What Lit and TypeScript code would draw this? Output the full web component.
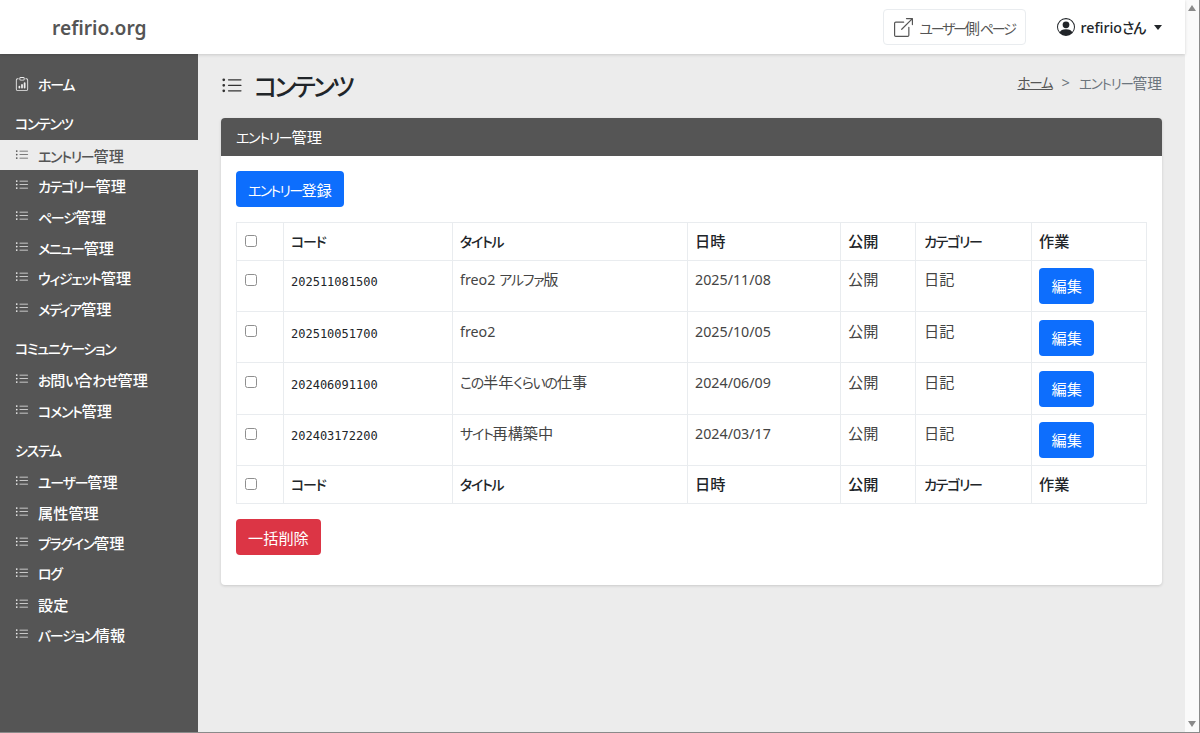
import { css, html, svg, LitElement } from "lit";
import { customElement } from "lit/decorators.js";

const listIcon = svg`<path fill-rule="evenodd" d="M5 11.5a.5.5 0 0 1 .5-.5h9a.5.5 0 0 1 0 1h-9a.5.5 0 0 1-.5-.5m0-4a.5.5 0 0 1 .5-.5h9a.5.5 0 0 1 0 1h-9a.5.5 0 0 1-.5-.5m0-4a.5.5 0 0 1 .5-.5h9a.5.5 0 0 1 0 1h-9a.5.5 0 0 1-.5-.5m-3 1a1 1 0 1 0 0-2 1 1 0 0 0 0 2m0 4a1 1 0 1 0 0-2 1 1 0 0 0 0 2m0 4a1 1 0 1 0 0-2 1 1 0 0 0 0 2"/>`;
const clipboardIcon = svg`<path d="M4 11a1 1 0 1 1 2 0v1a1 1 0 1 1-2 0zm6-4a1 1 0 1 1 2 0v5a1 1 0 1 1-2 0zM7 9a1 1 0 0 1 2 0v3a1 1 0 1 1-2 0z"/><path d="M4 1.5H3a2 2 0 0 0-2 2V14a2 2 0 0 0 2 2h10a2 2 0 0 0 2-2V3.5a2 2 0 0 0-2-2h-1v1h1a1 1 0 0 1 1 1V14a1 1 0 0 1-1 1H3a1 1 0 0 1-1-1V3.5a1 1 0 0 1 1-1h1z"/><path d="M9.5 1a.5.5 0 0 1 .5.5v1a.5.5 0 0 1-.5.5h-3a.5.5 0 0 1-.5-.5v-1a.5.5 0 0 1 .5-.5zm-3-1A1.5 1.5 0 0 0 5 1.5v1A1.5 1.5 0 0 0 6.5 4h3A1.5 1.5 0 0 0 11 2.5v-1A1.5 1.5 0 0 0 9.5 0z"/>`;
const externalIcon = svg`<path fill-rule="evenodd" d="M8.636 3.5a.5.5 0 0 0-.5-.5H1.5A1.5 1.5 0 0 0 0 4.5v10A1.5 1.5 0 0 0 1.5 16h10a1.5 1.5 0 0 0 1.5-1.5V7.864a.5.5 0 0 0-1 0V14.5a.5.5 0 0 1-.5.5h-10a.5.5 0 0 1-.5-.5v-10a.5.5 0 0 1 .5-.5h6.636a.5.5 0 0 0 .5-.5"/><path fill-rule="evenodd" d="M16 .5a.5.5 0 0 0-.5-.5h-5a.5.5 0 0 0 0 1h3.793L6.146 9.146a.5.5 0 1 0 .708.708L15 1.707V5.5a.5.5 0 0 0 1 0z"/>`;
const personIcon = svg`<path d="M11 6a3 3 0 1 1-6 0 3 3 0 0 1 6 0"/><path fill-rule="evenodd" d="M0 8a8 8 0 1 1 16 0A8 8 0 0 1 0 8m8-7a7 7 0 0 0-5.468 11.37C3.242 11.226 4.805 10 8 10s4.757 1.225 5.468 2.37A7 7 0 0 0 8 1"/>`;

const icon = (body: unknown, size: number) =>
  html`<svg class="icon" width=${size} height=${size} viewBox="0 0 16 16" fill="currentColor">${body}</svg>`;

// the reference font has narrow kana and small latin next to its kanji, so runs get their own class
const jp = (text: string) =>
  text.split(/([\u3040-\u30ff]+|[\x21-\x7e]+)/).map((run) => {
    if (/^[\u3040-\u30ff]/.test(run)) return html`<span class="k">${run}</span>`;
    if (/^[\x21-\x7e]/.test(run)) return html`<span class="l">${run}</span>`;
    return run;
  });

const menu = [
  {
    title: "コンテンツ",
    items: ["エントリー管理", "カテゴリー管理", "ページ管理", "メニュー管理", "ウィジェット管理", "メディア管理"],
  },
  { title: "コミュニケーション", items: ["お問い合わせ管理", "コメント管理"] },
  { title: "システム", items: ["ユーザー管理", "属性管理", "プラグイン管理", "ログ", "設定", "バージョン情報"] },
];

const entries = [
  { code: "202511081500", title: "freo2 アルファ版", date: "2025/11/08" },
  { code: "202510051700", title: "freo2", date: "2025/10/05" },
  { code: "202406091100", title: "この半年くらいの仕事", date: "2024/06/09" },
  { code: "202403172200", title: "サイト再構築中", date: "2024/03/17" },
];

@customElement("app-root")
export class AppRoot extends LitElement {
  headRow() {
    return html`
      <tr class="head">
        <td><input type="checkbox" /></td>
        <td>${jp("コード")}</td>
        <td>${jp("タイトル")}</td>
        <td>日時</td>
        <td>公開</td>
        <td>${jp("カテゴリー")}</td>
        <td>作業</td>
      </tr>
    `;
  }

  render() {
    return html`
      <div class="window">
        <header>
          <div class="brand">refirio.org</div>
          <a class="user-page">${icon(externalIcon, 19)}<span>${jp("ユーザー側ページ")}</span></a>
          <div class="account">${icon(personIcon, 18)}<span class="name">${jp("refirioさん")}</span><i class="caret"></i></div>
        </header>
        <div class="body">
          <nav>
            <div class="home">${icon(clipboardIcon, 14)}<span>${jp("ホーム")}</span></div>
            ${menu.map(
              (group) => html`
                <div class="group-title">${jp(group.title)}</div>
                ${group.items.map(
                  (item) => html`
                    <div class="item ${item === "エントリー管理" ? "active" : ""}">${icon(listIcon, 14)}<span>${jp(item)}</span></div>
                  `
                )}
              `
            )}
          </nav>
          <main>
            <div class="page-head">
              <h1>${icon(listIcon, 22)}<span>${jp("コンテンツ")}</span></h1>
              <div class="crumbs"><a>${jp("ホーム")}</a><span class="sep">&gt;</span><span>${jp("エントリー管理")}</span></div>
            </div>
            <section class="card">
              <div class="card-head">${jp("エントリー管理")}</div>
              <div class="card-body">
                <button class="btn primary">${jp("エントリー登録")}</button>
                <table>
                  <colgroup>
                    <col style="width:47px" />
                    <col style="width:169px" />
                    <col style="width:235px" />
                    <col style="width:153px" />
                    <col style="width:75px" />
                    <col style="width:116px" />
                    <col style="width:115px" />
                  </colgroup>
                  ${this.headRow()}
                  ${entries.map(
                    (entry) => html`
                      <tr>
                        <td><input type="checkbox" /></td>
                        <td><code>${entry.code}</code></td>
                        <td>${jp(entry.title)}</td>
                        <td>${jp(entry.date)}</td>
                        <td>公開</td>
                        <td>日記</td>
                        <td><button class="btn primary">編集</button></td>
                      </tr>
                    `
                  )}
                  ${this.headRow()}
                </table>
                <button class="btn danger">一括削除</button>
              </div>
            </section>
          </main>
        </div>
      </div>
      <div class="scrollbar"><i class="up"></i><i class="down"></i></div>
    `;
  }

  static styles = css`
    :host {
      display: flex;
      height: 733px;
      overflow: hidden;
      box-sizing: border-box;
      border-bottom: 1px solid #8a8a8a;
      font-family: "Noto Sans", "Noto Sans CJK JP", sans-serif;
      font-size: 15.2px;
      font-feature-settings: "palt";
      color: #212529;
    }

    .k {
      font-size: 0.92em;
      letter-spacing: -0.09em;
    }

    .l {
      font-size: 0.94em;
    }

    .window {
      flex: 1;
      min-width: 0;
      display: flex;
      flex-direction: column;
    }

    .scrollbar {
      width: 14px;
      flex: none;
      border-right: 1px solid #8a8a8a;
      background: #fafafa;
      display: flex;
      flex-direction: column;
      justify-content: space-between;
      align-items: center;
      padding: 5px 0;
    }

    .scrollbar i {
      width: 0;
      height: 0;
      border-left: 4.5px solid transparent;
      border-right: 4.5px solid transparent;
    }

    .scrollbar .up {
      border-bottom: 6px solid #8a8a8a;
    }

    .scrollbar .down {
      border-top: 6px solid #8a8a8a;
    }

    header {
      height: 54px;
      flex: none;
      display: flex;
      align-items: center;
      background: #fff;
      box-shadow: 0 1px 3px rgba(0, 0, 0, 0.15);
      position: relative;
      z-index: 1;
    }

    .brand {
      margin-left: 52px;
      margin-right: auto;
      font-size: 19.2px;
      font-weight: 600;
      color: #555;
    }

    .user-page {
      display: flex;
      align-items: center;
      gap: 6px;
      height: 34px;
      padding: 0 10px;
      border: 1px solid #e9ecef;
      border-radius: 4px;
      color: #555;
    }

    .user-page .k {
      letter-spacing: -0.16em;
    }

    .account {
      display: flex;
      align-items: center;
      margin: 0 23px 0 31px;
      color: #212529;
    }

    .name {
      margin-left: 6px;
      font-weight: 500;
    }

    .caret {
      width: 0;
      height: 0;
      margin-left: 9px;
      border-left: 4.5px solid transparent;
      border-right: 4.5px solid transparent;
      border-top: 5px solid #212529;
    }

    .body {
      flex: 1;
      min-height: 0;
      display: flex;
    }

    nav {
      width: 198px;
      flex: none;
      box-sizing: border-box;
      background: #555;
      color: #fff;
      font-weight: 500;
      padding-top: 15px;
    }

    .home,
    .item {
      display: flex;
      align-items: center;
      gap: 9px;
      padding-left: 15px;
      height: 30.6px;
    }

    .icon {
      flex: none;
    }

    .item .icon,
    .home .icon {
      color: #eee;
    }

    .group-title {
      padding-left: 15px;
      height: 23px;
      line-height: 23px;
      margin-top: 13.8px;
      margin-bottom: 4px;
    }

    .home + .group-title {
      margin-top: 12px;
      margin-bottom: 5px;
    }

    .item.active {
      background: #ececec;
      color: #555;
    }

    .item.active .icon {
      color: #555;
    }

    main {
      flex: 1;
      min-width: 0;
      background: #ececec;
      padding: 0 23px;
    }

    .page-head {
      height: 64px;
      display: flex;
      align-items: center;
      justify-content: space-between;
    }

    h1 {
      display: flex;
      align-items: center;
      gap: 11px;
      margin: 0;
      font-size: 26.6px;
      font-weight: 500;
    }

    h1 .k {
      letter-spacing: -0.11em;
    }

    h1 .icon {
      color: #333;
    }

    .crumbs {
      display: flex;
      gap: 9px;
      color: #6c757d;
      font-size: 14.7px;
      margin-top: -8px;
    }

    .crumbs a {
      color: #555;
      text-decoration: underline;
    }

    .card {
      background: #fff;
      border-radius: 4px;
      box-shadow: 0 1px 3px rgba(0, 0, 0, 0.15);
      height: 467px;
      overflow: hidden;
    }

    .card-head {
      height: 38px;
      line-height: 38px;
      padding-left: 15px;
      background: #555;
      color: #fff;
    }

    .card-body {
      padding: 15px;
    }

    .btn {
      display: block;
      height: 36px;
      padding: 0 12px;
      border: none;
      border-radius: 4px;
      font: inherit;
      color: #fff;
    }

    .btn .k {
      letter-spacing: -0.12em;
    }

    td .btn {
      padding: 0 12.5px;
    }

    .primary {
      background: #0d6efd;
    }

    .danger {
      background: #dc3545;
    }

    table {
      width: 910px;
      margin: 14.6px 0 15px;
      table-layout: fixed;
      border-collapse: collapse;
    }

    td {
      border: 1px solid #e9ecef;
      padding: 7.5px 7px 6.7px;
      height: 51.2px;
      line-height: 22px;
      box-sizing: border-box;
      vertical-align: top;
      color: #444;
    }

    td:first-child {
      padding: 0 8px;
    }

    .head td {
      height: 38.4px;
      padding: 0 7px;
      font-weight: 500;
      color: #212529;
      vertical-align: middle;
    }

    .head td:first-child {
      padding: 0 8px;
    }

    tr td:nth-child(6) {
      padding-left: 8px;
    }

    input {
      appearance: none;
      display: block;
      box-sizing: border-box;
      width: 12px;
      height: 12px;
      margin: 13px 0 0;
      border: 1px solid #8f8f8f;
      border-radius: 2.5px;
      background: #fff;
    }

    .head input {
      margin: 0;
    }

    code {
      font-family: "DejaVu Sans Mono", monospace;
      font-size: 12px;
      color: #212529;
      line-height: 28px;
    }
  `;
}
